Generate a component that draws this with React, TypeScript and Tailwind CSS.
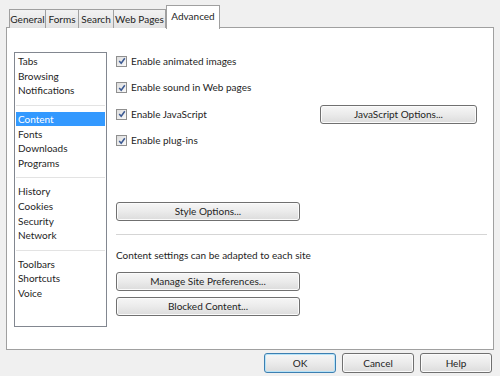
import React from "react";

const font = { fontFamily: 'Lato, "Noto Sans", sans-serif' };

function Btn({ label, className = "", primary = false }: { label: string; className?: string; primary?: boolean }) {
  return (
    <div
      className={
        "flex items-center justify-center rounded-[3px] border text-[10px] text-[#1e1e1e] bg-gradient-to-b from-[#f6f6f6] via-[#ebebeb] to-[#dcdcdc] " +
        (primary ? "border-[#3c7fb1] shadow-[inset_0_0_0_1px_#b6e3f8] " : "border-[#707070] shadow-[inset_0_0_0_1px_#fbfbfb] ") +
        className
      }
    >
      {label}
    </div>
  );
}

function Check({ label }: { label: string }) {
  return (
    <div className="flex items-center gap-[4px]">
      <div className="w-[11px] h-[11px] border border-[#8f8f8f] bg-gradient-to-br from-[#dcdcdc] to-[#fafafa] flex items-center justify-center">
        <svg width="8" height="8" viewBox="0 0 8 8">
          <path d="M1.2 4 L3.2 6.3 L6.8 1.2" stroke="#3c5a93" strokeWidth="1.5" fill="none" />
        </svg>
      </div>
      <span className="text-[10px] text-[#1e1e1e]">{label}</span>
    </div>
  );
}

const groups = [
  ["Tabs", "Browsing", "Notifications"],
  ["Content", "Fonts", "Downloads", "Programs"],
  ["History", "Cookies", "Security", "Network"],
  ["Toolbars", "Shortcuts", "Voice"],
];

export default function App() {
  const tabs: [string, string][] = [
    ["General", "w-[37px]"],
    ["Forms", "w-[34px]"],
    ["Search", "w-[36px]"],
    ["Web Pages", "w-[53px]"],
  ];
  return (
    <div className="w-[500px] h-[376px] bg-[#f0f0f0] overflow-hidden" style={font}>
      <div className="flex items-end pl-[9px] pt-[5px] h-[28px] relative z-10">
        {tabs.map(([t, w]) => (
          <div
            key={t}
            className={
              "h-[19px] -mr-px border border-b-0 border-[#a0a0a0] bg-gradient-to-b from-[#f2f2f2] to-[#e3e3e3] text-[10px] text-[#1e1e1e] flex items-center justify-center leading-none " +
              w
            }
          >
            {t}
          </div>
        ))}
        <div className="w-[54px] h-[24px] ml-px border border-b-0 border-[#a0a0a0] bg-white text-[10px] text-[#1e1e1e] flex items-center justify-center pb-[2px] -mb-px">
          Advanced
        </div>
      </div>
      <div className="ml-[6px] w-[488px] h-[323px] -mt-px border border-[#a0a0a0] bg-white flex pl-[7px] pt-[20px]">
        <div className="w-[93px] h-[275px] mt-[4px] border border-[#828790] px-px pt-[1px]">
          {groups.map((g, gi) => (
            <div key={gi} className={gi > 0 ? "border-t border-[#e3e3e3] mt-[7px] pt-[6px]" : "pt-0"}>
              {g.map((it) => (
                <div
                  key={it}
                  className={
                    "h-[14.6px] flex items-center pl-[2px] text-[10px] leading-none " +
                    (it === "Content" ? "bg-[#3399ff] text-white" : "text-[#1e1e1e]")
                  }
                >
                  {it}
                </div>
              ))}
            </div>
          ))}
        </div>
        <div className="ml-[9px] w-[371px] flex flex-col">
          <div className="h-[26.5px] flex items-center">
            <Check label="Enable animated images" />
          </div>
          <div className="h-[26.5px] flex items-center">
            <Check label="Enable sound in Web pages" />
          </div>
          <div className="h-[26.5px] flex items-center justify-between">
            <Check label="Enable JavaScript" />
            <Btn label="JavaScript Options..." className="w-[157px] h-[19px] mr-[10px]" />
          </div>
          <div className="h-[26.5px] flex items-center">
            <Check label="Enable plug-ins" />
          </div>
          <Btn label="Style Options..." className="w-[184px] h-[19px] mt-[48px]" />
          <div className="mt-[13px] h-[2px] border-t border-[#d5d5d5] border-b border-b-white" />
          <div className="mt-[12px] text-[10px] text-[#1e1e1e] leading-[14px]">Content settings can be adapted to each site</div>
          <Btn label="Manage Site Preferences..." className="w-[184px] h-[19px] mt-[10px]" />
          <Btn label="Blocked Content..." className="w-[184px] h-[19px] mt-[6px]" />
        </div>
      </div>
      <div className="flex justify-end gap-[6px] pr-[8px] pt-[3px]">
        <Btn label="OK" primary className="w-[72px] h-[20px]" />
        <Btn label="Cancel" className="w-[72px] h-[20px]" />
        <Btn label="Help" className="w-[72px] h-[20px]" />
      </div>
    </div>
  );
}
